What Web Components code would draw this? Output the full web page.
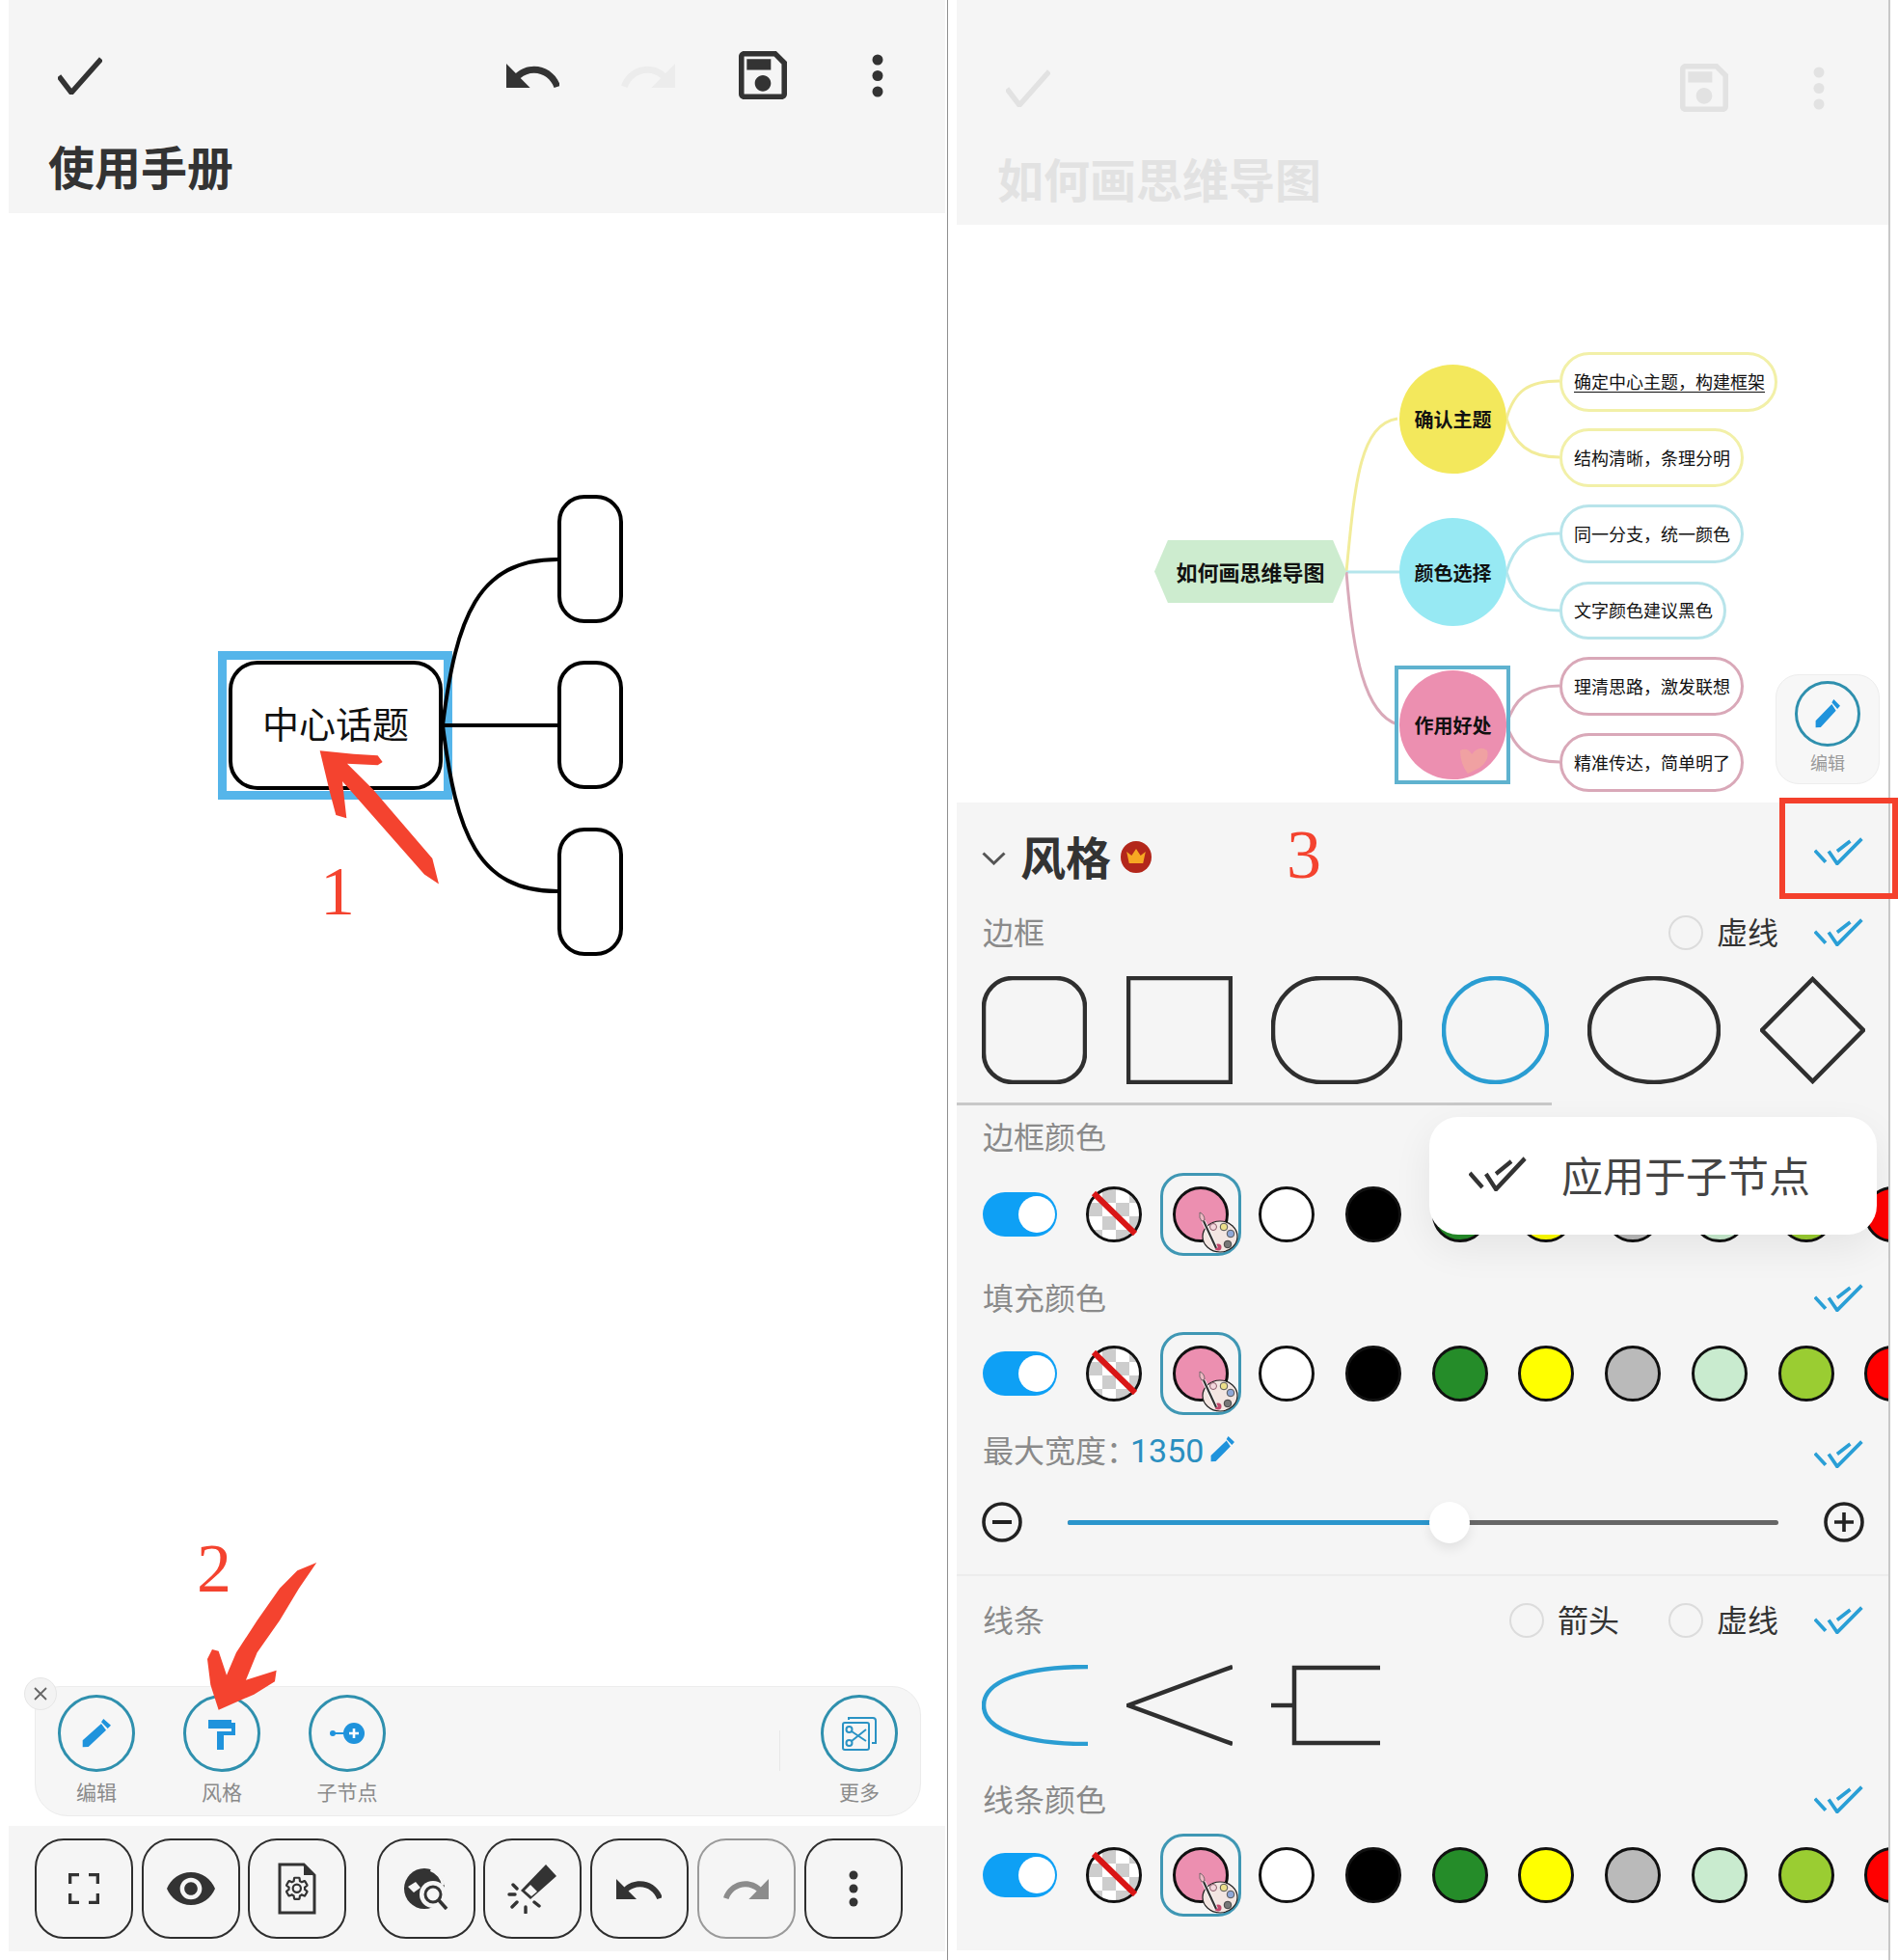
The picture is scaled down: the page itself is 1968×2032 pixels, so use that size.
<!DOCTYPE html>
<html lang="zh">
<head>
<meta charset="utf-8">
<title>使用手册</title>
<style>
  html, body { margin: 0; background: #fff; }
  body { font-family: "Noto Sans CJK SC", "Noto Sans", sans-serif; color: #333; }
</style>
</head>
<body>
<app-shell>
  <phone-panel slot="left" style="width:971px;height:2023px">
    <top-bar heading="使用手册">
      <app-icon slot="tools" name="undo" style="width:55px;height:25px;color:#333;margin-right:64px"></app-icon>
      <app-icon slot="tools" name="redo" style="width:56px;height:25px;color:#ececec;margin-right:66px"></app-icon>
    </top-bar>
    <intro-map></intro-map>
    <tool-dock>
      <round-tool label="编辑"><app-icon name="pencil" style="width:30px;height:30px;color:#1f93dc"></app-icon></round-tool>
      <round-tool label="风格"><app-icon name="roller" style="width:28px;height:33px;color:#1f93dc"></app-icon></round-tool>
      <round-tool label="子节点"><app-icon name="subnode" style="width:36px;height:24px;color:#1f93dc"></app-icon></round-tool>
      <round-tool slot="end" label="更多" style="margin-right:-2px"><app-icon name="more" style="width:36px;height:36px;color:#2a92c4"></app-icon></round-tool>
    </tool-dock>
    <bottom-bar>
      <square-btn><app-icon name="corners" style="width:32px;height:32px"></app-icon></square-btn>
      <square-btn><app-icon name="eye" style="width:50px;height:34px"></app-icon></square-btn>
      <square-btn><app-icon name="docgear" style="width:40px;height:54px"></app-icon></square-btn>
      <square-btn style="margin-left:23px"><app-icon name="globe" style="width:46px;height:44px"></app-icon></square-btn>
      <square-btn><app-icon name="brush" style="width:52px;height:52px"></app-icon></square-btn>
      <square-btn><app-icon name="undo" style="width:47px;height:21px"></app-icon></square-btn>
      <square-btn dim><app-icon name="redo" style="width:47px;height:21px"></app-icon></square-btn>
      <square-btn style="margin-left:1px"><app-icon name="dots" style="width:10px;height:38px"></app-icon></square-btn>
    </bottom-bar>
  </phone-panel>

  <phone-panel slot="right" style="width:966px;height:2022px">
    <top-bar faded heading="如何画思维导图"></top-bar>
    <example-map></example-map>
    <style-panel>
      <panel-row style="height:112px">
        <app-icon name="chevron" style="width:25px;height:14px;color:#555;margin:4px 15px 0 -1px"></app-icon>
        <span style="font-size:47px;font-weight:700;color:#333;line-height:1;padding-bottom:4px">风格</span>
        <app-icon name="crown" style="width:32px;height:33px;margin:0 auto 0 10px"></app-icon>
        <apply-check style="margin-bottom:12px"></apply-check>
      </panel-row>
      <panel-row style="height:46px">
        <field-label>边框</field-label>
        <radio-opt>虚线</radio-opt>
        <apply-check></apply-check>
      </panel-row>
      <panel-row style="height:112px;margin-top:22px;gap:40.5px;padding-left:26px">
        <shape-opt kind="round"></shape-opt>
        <shape-opt kind="square"></shape-opt>
        <shape-opt kind="pill"></shape-opt>
        <shape-opt kind="circle" active></shape-opt>
        <shape-opt kind="ellipse"></shape-opt>
        <shape-opt kind="diamond"></shape-opt>
      </panel-row>
      <div style="width:617px;height:3px;background:#c8c8c8;margin-top:19px"></div>

      <panel-row style="height:66px"><field-label>边框颜色</field-label></panel-row>
      <swatch-row style="height:94px"></swatch-row>
      <panel-row style="height:80px"><field-label>填充颜色</field-label><apply-check></apply-check></panel-row>
      <swatch-row style="height:76px"></swatch-row>
      <panel-row style="height:84px">
        <field-label style="margin:0 -7px 0 0">最大宽度：</field-label>
        <span style="font-size:34px;color:#2a8fc0;font-family:Roboto,sans-serif;margin-right:7px;line-height:1">1350</span>
        <app-icon name="pencil" style="width:25px;height:27px;color:#1f93dc;margin:0 auto 4px 0"></app-icon>
        <apply-check style="margin-top:8px"></apply-check>
      </panel-row>
      <size-slider style="height:64px"></size-slider>
      <div style="height:2px;background:#ececec;margin-top:22px"></div>

      <panel-row style="height:92px">
        <field-label>线条</field-label>
        <radio-opt style="margin-right:51px">箭头</radio-opt>
        <radio-opt>虚线</radio-opt>
        <apply-check></apply-check>
      </panel-row>
      <panel-row style="height:84px;padding-left:26px;gap:40px">
        <shape-opt kind="curve" active></shape-opt>
        <shape-opt kind="fork"></shape-opt>
        <shape-opt kind="bracket"></shape-opt>
      </panel-row>
      <panel-row style="height:112px"><field-label>线条颜色</field-label><apply-check></apply-check></panel-row>
      <swatch-row style="height:44px"></swatch-row>

      <apply-popup>应用于子节点</apply-popup>
    </style-panel>
  </phone-panel>
  <note-layer></note-layer>
</app-shell>

<script>
// every icon is cropped to its glyph so the host size is the visible size
const ICONS = {
  check: ["0 0 46 40", `<path d="M1 21 L14 38 L45 3" fill="none" stroke="currentColor" stroke-width="5.500"/>`],
  undo: ["2 7 20.1 9", `<path fill="currentColor" d="M12.5 8c-2.65 0-5.05.99-6.9 2.6L2 7v9h9l-3.62-3.62c1.39-1.16 3.16-1.88 5.12-1.88 3.54 0 6.55 2.31 7.6 5.5l2.37-.78C21.08 11.03 17.15 8 12.5 8z"/>`],
  redo: ["1.5 7 20.5 9", `<path fill="currentColor" d="M18.4 10.6C16.55 8.99 14.15 8 11.5 8c-4.65 0-8.58 3.03-9.96 7.22L3.9 16c1.05-3.19 4.05-5.5 7.6-5.5 1.95 0 3.73.72 5.12 1.88L13 16h9V7l-3.6 3.6z"/>`],
  save: ["3 3 18 18", `<path fill="currentColor" d="M17 3H5c-1.11 0-2 .9-2 2v14c0 1.1.89 2 2 2h14c1.1 0 2-.9 2-2V7l-4-4zm2 16H5V5h11.17L19 7.83V19zm-7-7c-1.66 0-3 1.34-3 3s1.34 3 3 3 3-1.34 3-3-1.34-3-3-3zM6 6h9v4H6z"/>`],
  kebab: ["0 0 12 45", `<g fill="currentColor"><circle cx="6" cy="6" r="5.5"/><circle cx="6" cy="22.5" r="5.5"/><circle cx="6" cy="39" r="5.5"/></g>`],
  dots: ["0 0 10 38", `<g fill="currentColor"><circle cx="5" cy="5" r="4.5"/><circle cx="5" cy="19" r="4.5"/><circle cx="5" cy="33" r="4.5"/></g>`],
  pencil: ["0 0 30 30", `<path fill="currentColor" d="M.7 22.3 20 5l5 6.7L6.7 29l-6 .3zM22.3 0 30 6.7 26.7 10 20 3.3z"/>`],
  roller: ["0 0 28 33", `<path fill="currentColor" d="M0 2h24v9H0zM24 5h4v13H14.5v-4H24zM9 14h7v19H9z"/>`],
  subnode: ["0 0 36 24", `<g fill="currentColor"><circle cx="3" cy="12" r="3"/><path d="M3 11h12v2H3z"/><circle cx="25" cy="12" r="11"/></g><path d="M25 7v10M20 12h10" stroke="#fff" stroke-width="2.6"/>`],
  more: ["0 0 36 36", `<g fill="none" stroke="currentColor" stroke-width="2"><rect x="1" y="7" width="27" height="28" rx="2"/><path d="M7 4V2h25q3 0 3 3v23h-4"/><circle cx="7.5" cy="14" r="3"/><circle cx="7.5" cy="28" r="3"/><path d="M10 16l15 10M10 26l15-12"/></g>`],
  corners: ["0 0 32 32", `<path d="M1.5 11V1.5H11M21 1.5h9.5V11M30.500 21v9.500H21M11 30.500H1.500V21" fill="none" stroke="currentColor" stroke-width="3.600"/>`],
  eye: ["1 4.500 22 15", `<path fill="currentColor" d="M12 4.500C7 4.500 2.730 7.610 1 12c1.730 4.390 6 7.500 11 7.500s9.270-3.110 11-7.500c-1.730-4.390-6-7.500-11-7.500zM12 17c-2.760 0-5-2.240-5-5s2.240-5 5-5 5 2.240 5 5-2.240 5-5 5zm0-8c-1.660 0-3 1.340-3 3s1.340 3 3 3 3-1.340 3-3-1.340-3-3-3z"/>`],
  docgear: ["0 0 40 54", `<path d="M2 2h25l11 11v39H2z" fill="none" stroke="currentColor" stroke-width="3"/><path d="M27 2l11 11H27z" fill="currentColor"/><g transform="translate(6 13) scale(1.15)"><path fill="none" stroke="currentColor" stroke-width="1.900" d="M19.140 12.940c.04-.3.06-.61.06-.94 0-.32-.02-.64-.07-.94l2.030-1.580c.18-.14.23-.41.12-.61l-1.920-3.320c-.12-.22-.37-.29-.59-.22l-2.390.96c-.5-.38-1.030-.7-1.620-.94l-.36-2.540c-.04-.24-.24-.41-.48-.41h-3.840c-.24 0-.43.17-.47.41l-.36 2.540c-.59.24-1.130.57-1.620.94l-2.390-.96c-.22-.08-.47 0-.59.22L2.740 8.870c-.12.21-.08.47.12.61l2.030 1.580c-.05.3-.09.63-.09.94s.02.64.07.94l-2.030 1.580c-.18.14-.23.41-.12.61l1.920 3.320c.12.22.37.29.59.22l2.390-.96c.5.38 1.030.7 1.620.94l.36 2.540c.05.24.24.41.48.41h3.840c.24 0 .44-.17.47-.41l.36-2.540c.59-.24 1.130-.56 1.620-.94l2.390.96c.22.08.47 0 .59-.22l1.920-3.320c.12-.22.07-.47-.12-.61l-2.010-1.580zM12 15.600c-1.980 0-3.600-1.620-3.600-3.600s1.620-3.600 3.600-3.600 3.600 1.620 3.600 3.600-1.620 3.600-3.600 3.600z"/></g>`],
  globe: ["0 0 46 44", `<circle cx="21" cy="22" r="21" fill="currentColor"/><path d="M28 1a21 21 0 0 1 14 17l-3 1a18 18 0 0 0-12-15zM4 20l8-5 5 6-7 5z" fill="#f5f5f5"/><circle cx="30" cy="28" r="14" fill="#f5f5f5"/><circle cx="30" cy="28" r="8" fill="none" stroke="currentColor" stroke-width="3"/><path d="M36 34l8 9" stroke="currentColor" stroke-width="3.600"/>`],
  brush: ["0 0 52 52", `<path d="M14 28 40 1l11 12-27 24z" fill="currentColor"/><path d="M18 28l6-6 7 7-6 5z" fill="#f5f5f5"/><path d="M2 32h6M6 22l4 4M5 45l5-5M19 45v6M28 40l5 4" stroke="currentColor" stroke-width="3.400" stroke-linecap="round"/>`],
  apply: ["0 0 64 36", `<path d="M1 17l14 15M19 18l11 16 32-32M30 18l17-13" fill="none" stroke="currentColor" stroke-width="4.600"/>`],
  chevron: ["0 0 25 14", `<path d="M1.500 1.500 12.500 12 23.500 1.500" fill="none" stroke="currentColor" stroke-width="3"/>`],
  crown: ["0 0 31 33", `<ellipse cx="15.500" cy="16.500" rx="15.500" ry="16.500" fill="#b3271b"/><path d="M6 11l5 4 4.500-7 4.500 7 5-4-2.500 12H8.500z" fill="#f7a823"/>`],
  minus: ["0 0 42 42", `<circle cx="21" cy="21" r="19" fill="none" stroke="currentColor" stroke-width="3.600"/><path d="M11 21h20" stroke="currentColor" stroke-width="4"/>`],
  plus: ["0 0 42 42", `<circle cx="21" cy="21" r="19" fill="none" stroke="currentColor" stroke-width="3.600"/><path d="M11 21h20M21 11v20" stroke="currentColor" stroke-width="3.600"/>`]
};

class AppIcon extends HTMLElement {
  connectedCallback() {
    const [vb, body] = ICONS[this.getAttribute("name")];
    if (!this.shadowRoot) this.attachShadow({ mode: "open" });
    this.shadowRoot.innerHTML = `<style>:host{display:block;flex:none}svg{display:block;width:100%;height:100%}</style>
      <svg viewBox="${vb}" preserveAspectRatio="none">${body}</svg>`;
  }
}
customElements.define("app-icon", AppIcon);

// small helper, most elements are only a style and some markup
function plain(name, css, html) {
  const template = document.createElement("template");
  template.innerHTML = `<style>${css}</style>${html}`;
  customElements.define(name, class extends HTMLElement {
    constructor() {
      super();
      this.attachShadow({ mode: "open" }).appendChild(template.content.cloneNode(true));
    }
  });
}

plain("app-shell", `
  :host { display: flex; position: relative; width: 1968px; height: 2032px; padding-left: 9px; box-sizing: border-box; overflow: hidden; }
  .line { width: 1px; height: 100%; background: #8f8f8f; flex: none; }
  .line.light { width: 2px; background: #c8c8c8; }
  .left { margin-right: 2px; }
  .right { margin-left: 9px; }
  slot { display: block; flex: none; }
`, `<slot name="left" class="left"></slot><div class="line"></div>
    <div class="right"><slot name="right"></slot></div><div class="line light"></div><slot></slot>`);

plain("phone-panel", `:host { display: flex; flex-direction: column; position: relative; overflow: hidden; }`, `<slot></slot>`);

class TopBar extends HTMLElement {
  connectedCallback() {
    this.attachShadow({ mode: "open" }).innerHTML = `<style>
      :host { display: block; flex: none; box-sizing: border-box; height: 221px; padding: 28px 64px 0 51px; background: #f5f5f5; color: #333; }
      :host([faded]) { height: 233px; padding: 41px 66px 0 51px; color: #e2e2e2; }
      .row { display: flex; align-items: center; height: 100px; }
      .right { margin-left: auto; display: flex; align-items: center; }
      h1 { margin: 19px 0 0 -10px; font-size: 48px; line-height: 48px; font-weight: 700; }
      :host([faded]) h1 { margin-left: -9px; }
    </style>
    <div class="row">
      <app-icon name="check" style="width:46px;height:40px"></app-icon>
      <div class="right">
        <slot name="tools"></slot>
        <app-icon name="save" style="width:50px;height:50px;margin-right:88px"></app-icon>
        <app-icon name="kebab" style="width:12px;height:45px"></app-icon>
      </div>
    </div>
    <h1>${this.getAttribute("heading")}</h1>`;
    const tools = this.shadowRoot.querySelector("slot");
    tools.style.cssText = "display:flex;align-items:center";
  }
}
customElements.define("top-bar", TopBar);

plain("map-node", `
  :host { position: absolute; box-sizing: border-box; display: flex; align-items: center; justify-content: center; color: #111; white-space: nowrap; }
  :host([leaf]) { justify-content: flex-start; padding: 0 0 2px 12px; font-size: 18px; border-radius: 31px; background: #fff; }
  :host([topic]) { border-radius: 50%; font-size: 20px; font-weight: 700; }
  :host([root]) { padding-bottom: 2px; font-size: 22px; font-weight: 700; clip-path: polygon(0 50%, 7% 0, 93% 0, 100% 50%, 93% 100%, 7% 100%); }
`, `<slot></slot>`);

plain("intro-map", `
  :host { display: block; position: relative; flex: 1; background: #fff; }
  svg { position: absolute; left: 0; top: 0; width: 100%; height: 100%; overflow: visible; }
  map-node { border: 4.500px solid #000; background: #fff; }
  .main { left: 228px; top: 464px; width: 222px; height: 134px; padding-bottom: 8px; border-radius: 30px; font-size: 38px; }
  .kid { left: 569px; width: 68px; height: 133px; border-radius: 28px; }
`, `<svg><g transform="translate(-9 -221)">
      <rect x="230.500" y="679.500" width="234" height="145" fill="none" stroke="#55b5ea" stroke-width="9"/>
      <g fill="none" stroke="#000" stroke-width="4">
        <path d="M459 752C473 640 495 580 578 580"/>
        <path d="M459 752H578"/>
        <path d="M459 752C473 864 495 924 578 924"/>
      </g></g></svg>
    <map-node class="main">中心话题</map-node>
    <map-node class="kid" style="top:292px"></map-node>
    <map-node class="kid" style="top:464px"></map-node>
    <map-node class="kid" style="top:637px"></map-node>`);

plain("example-map", `
  :host { display: block; position: relative; flex: 1; background: #fff; }
  svg { position: absolute; left: 0; top: 0; width: 100%; height: 100%; overflow: visible; }
  .float { position: absolute; left: 849px; top: 466px; width: 108px; height: 114px; box-sizing: border-box; padding-top: 6px; background: #f7f7f7; border: 1px solid #ededed; border-radius: 24px; display: flex; justify-content: center; }
  u { text-underline-offset: 3px; }
`, `<svg><g transform="translate(-992 -233)" fill="none" stroke-width="3">
      <g stroke="#f2ec9a"><path d="M1396 593C1405 500 1410 440 1449 434"/><path d="M1562 434C1570 405 1585 395 1617 395"/><path d="M1562 434C1570 460 1585 474 1617 474"/></g>
      <g stroke="#b5e6ec"><path d="M1396 593H1452"/><path d="M1562 593C1570 565 1585 553 1617 553"/><path d="M1562 593C1570 620 1585 633 1617 633"/></g>
      <g stroke="#d9a9b9"><path d="M1396 593C1403 680 1415 740 1449 751"/><path d="M1562 751C1570 725 1585 711 1617 711"/><path d="M1562 751C1570 775 1585 790 1617 790"/></g>
      <rect x="1448" y="692" width="116" height="119" stroke="#5fb2cf" stroke-width="4"/>
    </g></svg>
    <map-node root style="left:205px;top:327px;width:199px;height:65px;background:#cdeccf">如何画思维导图</map-node>
    <map-node topic style="left:459px;top:145px;width:111px;height:113px;background:#f3e85c">确认主题</map-node>
    <map-node topic style="left:459px;top:304px;width:111px;height:112px;background:#97e9f3">颜色选择</map-node>
    <map-node topic style="left:459px;top:462px;width:111px;height:113px;background:#ec8fb0">作用好处</map-node>
    <map-node leaf style="left:625px;top:132px;width:226px;height:62px;border:3px solid #f2f0a8"><u>确定中心主题，构建框架</u></map-node>
    <map-node leaf style="left:625px;top:211px;width:191px;height:61px;border:3px solid #f2f0a8">结构清晰，条理分明</map-node>
    <map-node leaf style="left:625px;top:290px;width:191px;height:61px;border:3px solid #b8e4ea">同一分支，统一颜色</map-node>
    <map-node leaf style="left:625px;top:370px;width:173px;height:60px;border:3px solid #b8e4ea">文字颜色建议黑色</map-node>
    <map-node leaf style="left:625px;top:448px;width:191px;height:61px;border:3px solid #d9a8b8">理清思路，激发联想</map-node>
    <map-node leaf style="left:625px;top:527px;width:191px;height:61px;border:3px solid #d9a8b8">精准传达，简单明了</map-node>
    <svg style="pointer-events:none"><path transform="translate(-992 -233)" d="M1514 778q8-4 12 4q8-10 16-4q3 10-8 18l-12 6q-8-10-8-24z" fill="#f2a79d" opacity=".75"/></svg>
    <div class="float"><round-tool small label="编辑"><app-icon name="pencil" style="width:26px;height:30px;color:#1f93dc"></app-icon></round-tool></div>`);

class RoundTool extends HTMLElement {
  connectedCallback() {
    this.attachShadow({ mode: "open" }).innerHTML = `<style>
      :host { display: flex; flex-direction: column; align-items: center; width: 130px; flex: none; }
      :host([small]) { width: 100%; }
      .disc { width: 80px; height: 80px; box-sizing: border-box; border: 3px solid #2f90ae; border-radius: 50%; display: flex; align-items: center; justify-content: center; }
      :host([small]) .disc { width: 68px; height: 68px; }
      .name { margin-top: 4px; font-size: 21px; line-height: 32px; color: #8a8a8a; }
      :host([small]) .name { margin-top: 3px; font-size: 18px; color: #999; line-height: 26px; }
    </style>
    <div class="disc"><slot></slot></div><div class="name">${this.getAttribute("label")}</div>`;
  }
}
customElements.define("round-tool", RoundTool);

plain("tool-dock", `
  :host { display: flex; flex: none; position: relative; box-sizing: border-box; height: 135px; margin: 0 25px 10px 27px; padding-top: 8px; background: #f6f6f6; border: 1px solid #ececec; border-radius: 26px 30px 34px 34px; }
  .close { position: absolute; left: -12px; top: -10px; width: 34px; height: 34px; box-sizing: border-box; border-radius: 50%; background: #f3f3f3; border: 1px solid #e6e6e6; display: flex; align-items: center; justify-content: center; }
  .close svg { width: 14px; height: 14px; }
  .tools { display: flex; margin-left: -2px; }
  .sep { width: 1px; height: 42px; margin: 37px 17px 0 auto; background: #e8e8e8; }
`, `<div class="close"><svg viewBox="0 0 14 14"><path d="M1 1l12 12M13 1 1 13" stroke="#666" stroke-width="1.800"/></svg></div>
    <div class="tools"><slot></slot></div><div class="sep"></div><slot name="end"></slot>`);

plain("bottom-bar", `
  :host { display: flex; flex: none; gap: 8.600px; box-sizing: border-box; height: 130px; padding: 13px 0 13px 27px; background: #f5f5f5; }
`, `<slot></slot>`);

plain("square-btn", `
  :host { display: flex; align-items: center; justify-content: center; width: 102px; height: 104px; box-sizing: border-box; flex: none; border: 2.500px solid #2e2e2e; border-radius: 30px; color: #333; }
  :host([dim]) { border-color: #9a9a9a; color: #8c8c8c; }
`, `<slot></slot>`);

plain("style-panel", `:host { display: block; position: relative; flex: none; height: 1190px; background: #f5f5f5; overflow: hidden; }`, `<slot></slot>`);

plain("panel-row", `:host { display: flex; align-items: center; box-sizing: border-box; padding: 0 26px 0 27px; }`, `<slot></slot>`);

plain("field-label", `:host { display: block; margin-right: auto; padding-bottom: 4px; font-size: 32px; line-height: 1; color: #8a8a8a; white-space: nowrap; }`, `<slot></slot>`);

plain("radio-opt", `
  :host { display: flex; align-items: center; gap: 14px; font-size: 32px; line-height: 1; color: #333; }
  i { width: 36px; height: 36px; box-sizing: border-box; border: 2.500px solid #dcdcdc; border-radius: 50%; }
  span { padding-bottom: 4px; }
`, `<i></i><span><slot></slot></span>`);

plain("apply-check", `:host { display: block; flex: none; width: 51px; height: 29px; margin: 0 0 2px 37px; color: #2a9fd6; }`,
  `<app-icon name="apply" style="width:100%;height:100%"></app-icon>`);

class ShapeOpt extends HTMLElement {
  connectedCallback() {
    const shapes = {
      round: [109, `<rect x="2" y="2" width="105" height="108" rx="30"/>`],
      square: [110, `<rect x="2" y="2" width="106" height="108"/>`],
      pill: [136, `<rect x="2" y="2" width="132" height="108" rx="50"/>`],
      circle: [111, `<ellipse cx="55.500" cy="56" rx="53.500" ry="54"/>`],
      ellipse: [138, `<ellipse cx="69" cy="56" rx="67" ry="54"/>`],
      diamond: [109, `<path d="M54.500 3 107 56 54.500 109 2 56z"/>`],
      curve: [110, `<path d="M110 2C40 2 2 18 2 42s38 40 108 40"/>`],
      fork: [110, `<path d="M110 2 2 42l108 40"/>`],
      bracket: [113, `<path d="M0 42h24M113 3H24v78h89"/>`]
    };
    const [w, body] = shapes[this.getAttribute("kind")];
    const tall = ["curve", "fork", "bracket"].includes(this.getAttribute("kind")) ? 84 : 112;
    const colour = this.hasAttribute("active") ? "#2a9dd2" : "#2f2f2f";
    this.attachShadow({ mode: "open" }).innerHTML = `<style>:host{display:block;flex:none}svg{display:block}</style>
      <svg width="${w}" height="${tall}" viewBox="0 0 ${w} ${tall}" fill="none" stroke="${colour}" stroke-width="4.500">${body}</svg>`;
  }
}
customElements.define("shape-opt", ShapeOpt);

plain("color-swatch", `
  :host { display: block; position: relative; flex: none; width: 58px; height: 58px; box-sizing: border-box; border: 3px solid #111; border-radius: 50%; background: var(--c, #fff); }
  :host([picked])::after { content: ""; position: absolute; left: -16px; top: -17px; width: 84px; height: 86px; box-sizing: border-box; border: 3px solid #3f97b4; border-radius: 24px; }
`, `<slot></slot>`);

const PALETTE = `<svg viewBox="0 0 58 58" style="position:absolute;left:-3px;top:-3px;width:58px;height:58px;overflow:visible;z-index:1">
  <ellipse cx="49" cy="52" rx="18" ry="16" fill="#f3e6e2" stroke="#222" stroke-width="1.200"/>
  <circle cx="42" cy="42" r="3.500" fill="#f3d7dc" stroke="#8b5a6a"/>
  <circle cx="53" cy="42" r="3.800" fill="#ecdf8a" stroke="#555"/>
  <circle cx="60" cy="49" r="3.800" fill="#8fa8d8" stroke="#555"/>
  <circle cx="57" cy="60" r="3.800" fill="#777" stroke="#444"/>
  <circle cx="47" cy="63" r="3.500" fill="#c2476b"/>
  <path d="M32 36 45 64" stroke="#fff" stroke-width="4"/><path d="M32 36 45 64" stroke="#333" stroke-width="2.200"/>
  <path d="M28 27q5 2 5 8l-3 1q-3-3-2-9z" fill="#f0b9c4" stroke="#555" stroke-width=".8"/></svg>`;

const NONE = `<svg viewBox="0 0 58 58" style="position:absolute;left:-3px;top:-3px;width:58px;height:58px;overflow:visible">
  <path d="M8 7 51 49" stroke="#d91616" stroke-width="6"/></svg>`;

class SwatchRow extends HTMLElement {
  connectedCallback() {
    const tail = ["#fff", "#000", "#258c29", "#ffff00", "#bababa", "#c9ebcf", "#9acd32", "#ff0000"];
    this.attachShadow({ mode: "open" }).innerHTML = `<style>
      :host { display: flex; align-items: center; gap: 31.700px; padding-left: 27px; }
      .toggle { position: relative; flex: none; width: 77px; height: 46px; margin-right: -1.700px; border-radius: 23px; background: #0ea0f5; }
      .toggle i { position: absolute; right: 2px; top: 4px; width: 38px; height: 38px; border-radius: 50%; background: #fff; }
      .none { background: repeating-conic-gradient(#cdcdcd 0 25%, #fff 0 50%) 0 0 / 28px 28px; }
    </style>
    <div class="toggle"><i></i></div>
    <color-swatch class="none">${NONE}</color-swatch>
    <color-swatch picked style="--c:#ec8fb0">${PALETTE}</color-swatch>
    ${tail.map(c => `<color-swatch style="--c:${c}"></color-swatch>`).join("")}`;
  }
}
customElements.define("swatch-row", SwatchRow);

plain("size-slider", `
  :host { display: flex; align-items: center; padding: 0 25px 0 26px; color: #222; }
  .track { position: relative; flex: 1; height: 5px; margin: 0 47px; background: #666; border-radius: 3px; }
  .fill { position: absolute; left: 0; top: 0; height: 100%; width: 53%; background: #2a95cc; border-radius: 3px; }
  .thumb { position: absolute; left: 53.700%; top: 50%; width: 42px; height: 43px; margin: -21px 0 0 -21px; border-radius: 50%; background: #fff; box-shadow: 0 6px 12px rgba(0,0,0,.08); }
`, `<app-icon name="minus" style="width:42px;height:42px"></app-icon>
    <div class="track"><div class="fill"></div><div class="thumb"></div></div>
    <app-icon name="plus" style="width:42px;height:42px"></app-icon>`);

plain("apply-popup", `
  :host { position: absolute; left: 490px; top: 326px; width: 464px; height: 122px; box-sizing: border-box; padding: 0 0 4px 41px; display: flex; align-items: center; gap: 36px; background: #fff; border-radius: 30px; box-shadow: 0 14px 40px rgba(0,0,0,.07); font-size: 43px; color: #444; white-space: nowrap; z-index: 2; }
`, `<app-icon name="apply" style="width:60px;height:36px;color:#333"></app-icon><slot></slot>`);

plain("note-layer", `
  :host { position: absolute; left: 0; top: 0; width: 1968px; height: 2032px; pointer-events: none; z-index: 5; }
  svg { position: absolute; left: 0; top: 0; }
  span { position: absolute; font: 72px/72px "Liberation Serif", serif; color: #f4432f; width: 36px; text-align: center; }
  .box { position: absolute; left: 1845px; top: 827px; width: 123px; height: 105px; box-sizing: border-box; border: 6px solid #f4402c; }
`, `<svg width="1968" height="2032" fill="#f4432f">
      <g transform="translate(200 480) scale(.3333)"><path d="M395 895 500 905 575 910 590 930 575 940 480 935 560 1015 745 1230 765 1310 720 1280 465 990 478 1105 445 1095 425 1020z"/></g>
      <g transform="translate(0 1580) scale(.3333)"><path d="M985 120 930 200 870 300 800 400 765 485 860 455 855 490 790 530 680 578 655 500 645 420 660 390 680 395 705 470 735 400 800 300 870 200 925 145z"/></g>
    </svg>
    <span style="left:332px;top:888px">1</span>
    <span style="left:204px;top:1590px">2</span>
    <span style="left:1334px;top:850px">3</span>
    <div class="box"></div>`);
</script>
</body>
</html>
